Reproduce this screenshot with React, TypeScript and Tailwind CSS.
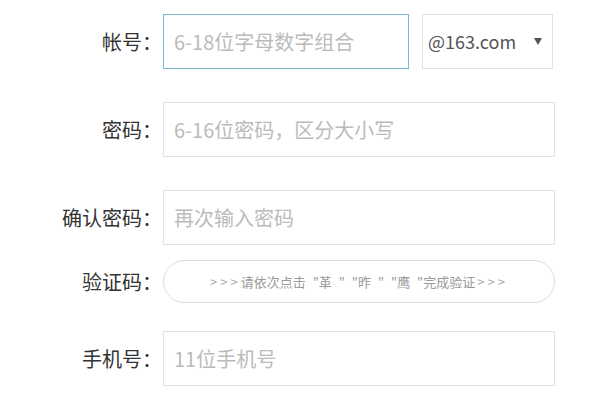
import React from 'react';

const Label: React.FC<{ text: string }> = ({ text }) => (
  <div className="flex shrink-0 items-center text-[20px] text-[#333] mr-[4px]">
    <span className="w-[142px] text-right">{text}</span>
    <span className="w-[17px] text-center">：</span>
  </div>
);

const TextField: React.FC<{ placeholder: string; focused?: boolean; width?: string }> = ({
  placeholder,
  focused,
  width = 'w-[392px]',
}) => (
  <input
    placeholder={placeholder}
    className={`${width} h-[55px] border bg-white px-[10px] text-[20px] text-[#333] outline-none placeholder:text-[#bbb] ${
      focused ? 'border-[#7ab9d6]' : 'border-[#e1e1e1]'
    }`}
  />
);

const App: React.FC = () => {
  return (
    <div className="w-[600px] h-[400px] overflow-hidden bg-white pt-[14px] font-['Noto_Sans_CJK_SC',sans-serif]">
      <div className="flex items-center">
        <Label text="帐号" />
        <TextField placeholder="6-18位字母数字组合" focused width="w-[246px]" />
        <div className="ml-[13px] flex h-[55px] w-[131px] items-center justify-between border border-[#e1e1e1] pl-[5px] pr-[10px]">
          <span className="text-[18px] text-[#555]">@163.com</span>
          <svg width="8" height="7" viewBox="0 0 8 7">
            <polygon points="0,0 8,0 4,7" fill="#555" />
          </svg>
        </div>
      </div>

      <div className="mt-[33px] flex items-center">
        <Label text="密码" />
        <TextField placeholder="6-16位密码，区分大小写" />
      </div>

      <div className="mt-[33px] flex items-center">
        <Label text="确认密码" />
        <TextField placeholder="再次输入密码" />
      </div>

      <div className="mt-[15px] flex items-center">
        <Label text="验证码" />
        <div className="flex h-[43px] w-[392px] items-center justify-center rounded-full border border-[#dcdcdc] text-[13px] text-[#999]">
          <span className="tracking-[3px] text-[#aaa]">&gt;&gt;&gt;</span>
          <span className="whitespace-pre [word-spacing:4px]">请依次点击 "革 " "昨 " "鹰 "完成验证</span>
          <span className="ml-[2px] tracking-[3px] text-[#aaa]">&gt;&gt;&gt;</span>
        </div>
      </div>

      <div className="mt-[28px] flex items-center">
        <Label text="手机号" />
        <TextField placeholder="11位手机号" />
      </div>
    </div>
  );
};

export default App;
